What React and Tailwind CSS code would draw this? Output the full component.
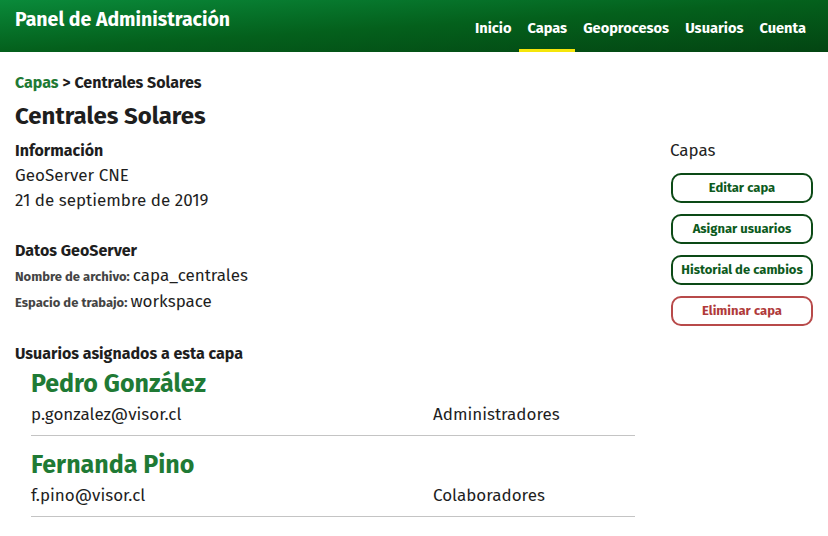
import React from 'react';

const font = { fontFamily: '"Fira Sans", Roboto, "Noto Sans", sans-serif' };

const NavLink = ({ label, active }) => (
    <a className={`flex items-center h-full px-[8px] pt-[3px] text-[14.6px] font-bold text-white border-b-[3px] ${active ? 'border-[#f5e60a]' : 'border-transparent'}`}>
        {label}
    </a>
);

const ActionButton = ({ label, danger }) => (
    <button className={`w-[142px] h-[30px] rounded-[10px] border-2 bg-white text-[13px] font-bold ${danger ? 'border-[#b84a4a] text-[#b03a3a]' : 'border-[#0c4a16] text-[#0c5a1c]'}`}>
        {label}
    </button>
);

const users = [
    { name: 'Pedro González', email: 'p.gonzalez@visor.cl', group: 'Administradores' },
    { name: 'Fernanda Pino', email: 'f.pino@visor.cl', group: 'Colaboradores' },
];

const App = () => {
    return (
        <div className="min-h-screen bg-white text-[#1e1e1e]" style={font}>
            <header className="h-[52px] flex items-stretch justify-between pl-[15px] pr-[14px] bg-gradient-to-br from-[#0a8a3a] via-[#04601c] to-[#034512]">
                <h1 className="text-[19.5px] font-bold text-white pt-[5px]">Panel de Administración</h1>
                <nav className="flex items-stretch pt-[6px]">
                    <NavLink label="Inicio" />
                    <NavLink label="Capas" active />
                    <NavLink label="Geoprocesos" />
                    <NavLink label="Usuarios" />
                    <NavLink label="Cuenta" />
                </nav>
            </header>

            <main className="flex pl-[15px] pr-[15px] pt-[20px]">
                <div className="w-[620px]">
                    <p className="text-[16px] font-bold leading-[22px]">
                        <span className="text-[#1f7a35]">Capas</span> &gt; Centrales Solares
                    </p>
                    <h2 className="text-[24px] font-bold leading-[30px] mt-[7px]">Centrales Solares</h2>

                    <section className="mt-[7px] text-[17px] leading-[25px]">
                        <h3 className="text-[16px] font-bold">Información</h3>
                        <p>GeoServer CNE</p>
                        <p>21 de septiembre de 2019</p>
                    </section>

                    <section className="mt-[25px] text-[17px] leading-[25px]">
                        <h3 className="text-[16px] font-bold">Datos GeoServer</h3>
                        <p><span className="text-[13px] font-bold text-[#444]">Nombre de archivo: </span>capa_centrales</p>
                        <p><span className="text-[13px] font-bold text-[#444]">Espacio de trabajo: </span>workspace</p>
                    </section>

                    <section className="mt-[26px]">
                        <h3 className="text-[16px] font-bold leading-[25px]">Usuarios asignados a esta capa</h3>
                        <div className="pl-[16px] pt-[4px] space-y-[15px]">
                            {users.map((u) => (
                                <div key={u.email} className="border-b border-[#c4c4c4] pb-[9px]">
                                    <p className="text-[25px] font-bold text-[#1f7a35] leading-[28px]">{u.name}</p>
                                    <div className="flex mt-[6px] text-[17px] leading-[22px]">
                                        <span className="w-[402px]">{u.email}</span>
                                        <span>{u.group}</span>
                                    </div>
                                </div>
                            ))}
                        </div>
                    </section>
                </div>

                <aside className="ml-auto w-[142px] pt-[68px]">
                    <p className="text-[17px] leading-[22px] text-[#222] -ml-[1px]">Capas</p>
                    <div className="flex flex-col gap-[11px] mt-[11px]">
                        <ActionButton label="Editar capa" />
                        <ActionButton label="Asignar usuarios" />
                        <ActionButton label="Historial de cambios" />
                        <ActionButton label="Eliminar capa" danger />
                    </div>
                </aside>
            </main>
        </div>
    );
};

export default App;
